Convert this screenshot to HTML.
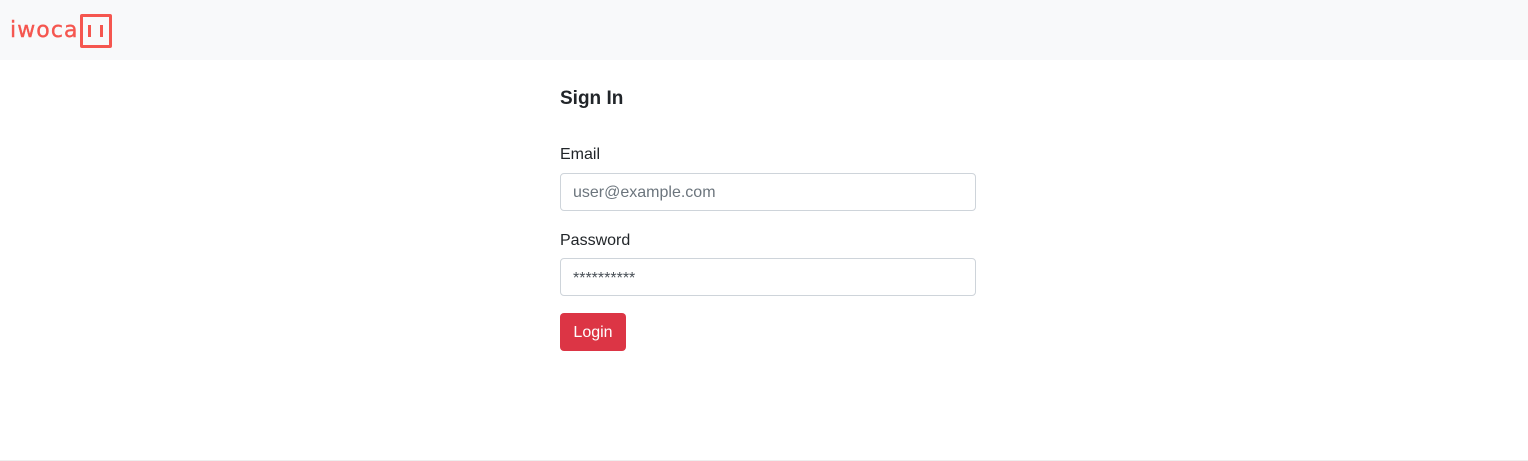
<!DOCTYPE html>
<html><head><style>
body{margin:0;width:1528px;height:461px;background:#fff;font-family:"Liberation Sans",sans-serif;position:relative;overflow:hidden}
.hdr{position:absolute;left:0;top:0;width:1528px;height:60px;background:#f8f9fa}
.logo{position:absolute;left:10px;top:18px;font-size:22px;color:#f5564f;letter-spacing:1.1px;font-family:"DejaVu Sans",sans-serif;-webkit-text-stroke:0.4px #f5564f}
.box{position:absolute;left:80px;top:14px;width:26px;height:28px;border:3px solid #f5564f;border-radius:2px}
.b1{position:absolute;left:5px;top:8px;width:3px;height:12px;background:#f5564f}
.b2{position:absolute;left:17px;top:8px;width:3px;height:12px;background:#f5564f}
h1{position:absolute;left:560px;top:88px;margin:0;font-size:19px;font-weight:bold;color:#212529}
.lab{position:absolute;left:560px;font-size:16px;color:#212529}
.inp{position:absolute;left:560px;width:414px;height:36px;border:1px solid #ced4da;border-radius:4px;box-sizing:content-box}
.inp span{position:absolute;left:12px;top:10px;font-size:16px;color:#6c757d}
.btn{position:absolute;left:560px;top:313px;width:66px;height:38px;background:#dc3545;border-radius:4px;color:#fff;font-size:16px;text-align:center;line-height:40px}
.foot{position:absolute;left:0;top:460px;width:1528px;height:1px;background:#eee}
</style></head><body>
<div class="hdr"><div class="logo">iwoca</div><div class="box"><div class="b1"></div><div class="b2"></div></div></div>
<h1>Sign In</h1>
<div class="lab" style="top:146px">Email</div>
<div class="inp" style="top:173px"><span>user@example.com</span></div>
<div class="lab" style="top:232px">Password</div>
<div class="inp" style="top:258px"><span style="color:#495057;top:11px">**********</span></div>
<div class="btn">Login</div>
<div class="foot"></div>
</body></html>
